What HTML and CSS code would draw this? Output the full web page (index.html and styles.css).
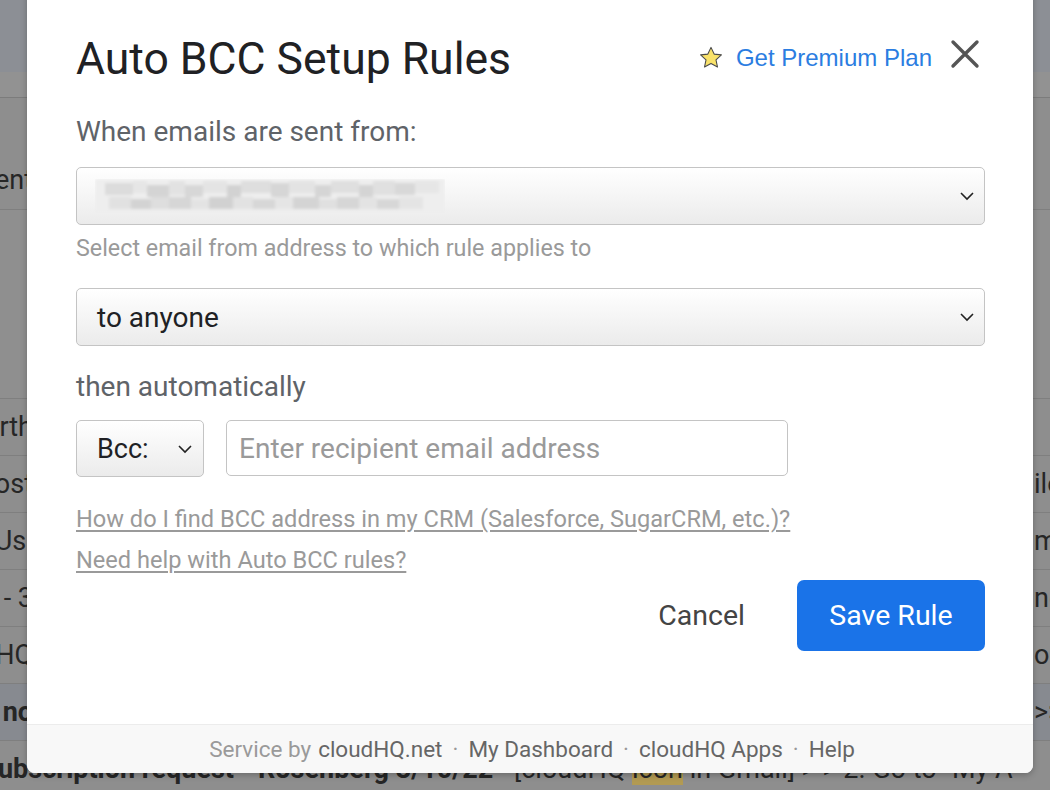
FILE: index.html
```html
<!DOCTYPE html>
<html>
<head>
<meta charset="utf-8">
<link rel="stylesheet" href="styles.css">
</head>
<body>
<div class="bg">
  <div class="bg-top"></div>
  <div class="bg-top2"></div>
  <div class="bg-sec"><span class="l">Sent</span></div>
  <div class="bg-empty"></div>
  <div class="bg-row"><span class="l">North</span><span class="r"></span></div>
  <div class="bg-row"><span class="l">Post</span><span class="r">iles</span></div>
  <div class="bg-row"><span class="l">Us&nbsp;</span><span class="r">mail</span></div>
  <div class="bg-row"><span class="l">- 3</span><span class="r">nd</span></div>
  <div class="bg-row"><span class="l">udHQ</span><span class="r">or</span></div>
  <div class="bg-row unread"><span class="l b">no</span><span class="r">&gt;&gt;</span></div>
  <div class="bg-row last"><span class="full"><b>ubscription request - Rosenberg 3/10/22</b> - [cloudHQ <mark>icon</mark> in Gmail] &gt; &gt; 2. Go to "My A</span></div>
</div>

<div class="modal">
  <div class="content">
    <div class="header">
      <h1 class="title">Auto BCC Setup Rules</h1>
      <div class="header-right">
        <svg class="star" width="26" height="26" viewBox="0 0 24 24"><path d="M12 2.2l2.9 6.2 6.7.7-5 4.6 1.4 6.6L12 17l-6 3.3 1.4-6.6-5-4.6 6.7-.7z" fill="#f9e26a" stroke="#4a4a4a" stroke-width="1" stroke-linejoin="round"/></svg>
        <a class="premium">Get Premium Plan</a>
        <svg class="close" width="30" height="30" viewBox="0 0 30 30"><path d="M3 3L27 27M27 3L3 27" stroke="#555" stroke-width="3.4" stroke-linecap="round"/></svg>
      </div>
    </div>

    <div class="label first">When emails are sent from:</div>
    <div class="select wide">
      <svg class="blur" width="350" height="34" viewBox="0 0 350 34">
        <defs><filter id="bl"><feGaussianBlur stdDeviation="1.4"/></filter></defs>
        <g filter="url(#bl)">
          <rect x="0" y="0" width="350" height="34" fill="#eeeeee"/>
          <rect x="10" y="4" width="28" height="12" fill="#dcdcdc"/>
          <rect x="38" y="2" width="14" height="12" fill="#e6e6e6"/>
          <rect x="52" y="6" width="22" height="12" fill="#d4d4d4"/>
          <rect x="74" y="2" width="16" height="14" fill="#e2e2e2"/>
          <rect x="90" y="6" width="18" height="12" fill="#d7d7d7"/>
          <rect x="108" y="2" width="24" height="12" fill="#e4e4e4"/>
          <rect x="132" y="6" width="14" height="12" fill="#d2d2d2"/>
          <rect x="146" y="2" width="30" height="12" fill="#dedede"/>
          <rect x="176" y="4" width="18" height="14" fill="#d6d6d6"/>
          <rect x="194" y="2" width="26" height="12" fill="#e3e3e3"/>
          <rect x="220" y="6" width="16" height="12" fill="#d5d5d5"/>
          <rect x="236" y="2" width="28" height="12" fill="#dfdfdf"/>
          <rect x="264" y="6" width="14" height="12" fill="#d4d4d4"/>
          <rect x="278" y="2" width="22" height="14" fill="#e0e0e0"/>
          <rect x="300" y="4" width="20" height="12" fill="#d8d8d8"/>
          <rect x="320" y="2" width="24" height="12" fill="#e6e6e6"/>
          <rect x="14" y="18" width="22" height="12" fill="#e1e1e1"/>
          <rect x="36" y="20" width="20" height="10" fill="#d3d3d3"/>
          <rect x="56" y="18" width="18" height="12" fill="#dedede"/>
          <rect x="74" y="18" width="22" height="12" fill="#d6d6d6"/>
          <rect x="96" y="20" width="18" height="10" fill="#e3e3e3"/>
          <rect x="114" y="18" width="24" height="12" fill="#d1d1d1"/>
          <rect x="138" y="18" width="20" height="12" fill="#e2e2e2"/>
          <rect x="158" y="20" width="22" height="10" fill="#d7d7d7"/>
          <rect x="180" y="18" width="18" height="12" fill="#e5e5e5"/>
          <rect x="198" y="18" width="26" height="12" fill="#d4d4d4"/>
          <rect x="224" y="20" width="18" height="10" fill="#e0e0e0"/>
          <rect x="242" y="18" width="22" height="12" fill="#d6d6d6"/>
          <rect x="264" y="18" width="18" height="12" fill="#e3e3e3"/>
          <rect x="282" y="20" width="22" height="10" fill="#d7d7d7"/>
          <rect x="304" y="18" width="24" height="12" fill="#e4e4e4"/>
        </g>
      </svg>
      <svg class="chev" width="16" height="10" viewBox="0 0 16 10"><path d="M2 2l6 6 6-6" fill="none" stroke="#222" stroke-width="1.6"/></svg>
    </div>
    <div class="hint">Select email from address to which rule applies to</div>

    <div class="select wide second">
      <span class="sel-text">to anyone</span>
      <svg class="chev" width="16" height="10" viewBox="0 0 16 10"><path d="M2 2l6 6 6-6" fill="none" stroke="#222" stroke-width="1.6"/></svg>
    </div>

    <div class="label then">then automatically</div>
    <div class="recip-row">
      <div class="select bcc">
        <span class="sel-text">Bcc:</span>
        <svg class="chev" width="16" height="10" viewBox="0 0 16 10"><path d="M2 2l6 6 6-6" fill="none" stroke="#222" stroke-width="1.6"/></svg>
      </div>
      <input class="recip" type="text" placeholder="Enter recipient email address">
    </div>

    <a class="help first-link">How do I find BCC address in my CRM (Salesforce, SugarCRM, etc.)?</a>
    <a class="help second-link">Need help with Auto BCC rules?</a>

    <div class="actions">
      <button class="cancel">Cancel</button>
      <button class="save">Save Rule</button>
    </div>
  </div>
  <div class="footer">
    <span class="muted">Service by</span> <span class="fl">cloudHQ.net</span> <span class="dot">·</span> <span class="fl">My Dashboard</span> <span class="dot">·</span> <span class="fl">cloudHQ Apps</span> <span class="dot">·</span> <span class="fl">Help</span>
  </div>
</div>
</body>
</html>
```
FILE: styles.css
```css
* { box-sizing: border-box; }
html, body { margin: 0; padding: 0; }
body {
  width: 1050px;
  height: 790px;
  overflow: hidden;
  position: relative;
  background: #8e8e8e;
  font-family: Roboto, "Liberation Sans", sans-serif;
}

/* dimmed background (gmail list) */
.bg { display: flex; flex-direction: column; color: #262626; font-size: 27px; }
.bg-top { height: 72px; background: #8c8f95; }
.bg-top2 { height: 26px; background: #929292; border-bottom: 1px solid #7c7c7c; }
.bg-sec { height: 112px; display: flex; align-items: flex-end; padding-bottom: 13px; border-bottom: 1px solid #7f7f7f; }
.bg-empty { height: 189px; border-bottom: 1px solid #7f7f7f; background: #8f8f8f; }
.bg-row { height: 57px; display: flex; align-items: center; justify-content: space-between; border-bottom: 1px solid #7f7f7f; }
.bg-row.unread { background: #878a90; }
.l { width: 33px; display: flex; justify-content: flex-end; overflow: hidden; white-space: nowrap; }
.l.b { font-weight: bold; }
.r { width: 16px; overflow: hidden; white-space: nowrap; }
.bg-row.last .full { white-space: nowrap; margin-left: -2px; font-size: 27px; }
.bg-row.last b { font-weight: bold; }
mark { background: #b29a52; color: #262626; }

/* modal */
.modal {
  position: absolute;
  left: 27px;
  top: -20px;
  width: 1006px;
  height: 793px;
  background: #fff;
  border-radius: 8px;
  box-shadow: 0 2px 6px rgba(0,0,0,0.25);
  display: flex;
  flex-direction: column;
  overflow: hidden;
}
.content { padding: 53px 48px 0 49px; display: flex; flex-direction: column; align-items: flex-start; }

.header { width: 100%; display: flex; align-items: center; justify-content: space-between; height: 50px; }
.title { margin: 0; font-weight: 400; font-size: 44.5px; line-height: 50px; color: #202124; margin-top: 2px; }
.header-right { display: flex; align-items: center; margin-top: -2px; }
.star { margin-right: 12px; margin-top: 2px; }
.premium { font-family: "Liberation Sans", Arial, sans-serif; font-size: 24px; color: #2b7de1; margin-right: 18px; margin-top: 2px; }
.close { margin-right: 5px; margin-top: -6px; }

.label { font-size: 28px; line-height: 36px; color: #5f6368; }
.label.first { margin-top: 31px; }
.label.then { margin-top: 23px; }

.select {
  display: flex;
  align-items: center;
  justify-content: space-between;
  height: 58px;
  border: 1.5px solid #c4c4c4;
  border-radius: 5px;
  background: linear-gradient(#ffffff, #ebebeb);
  padding: 0 9px 0 20px;
}
.select.wide { width: 909px; margin-top: 17px; }
.select.wide.second { margin-top: 26px; }
.blur { margin-left: -2px; }
.sel-text { font-size: 28px; color: #202124; }

.hint { margin-top: 9px; font-size: 23.3px; line-height: 28px; color: #9a9a9a; }

.recip-row { margin-top: 15px; display: flex; gap: 22px; }
.select.bcc { width: 128px; height: 57px; padding: 0 10px 0 20px; }
.select.bcc .sel-text { font-size: 27px; }
.recip {
  width: 562px;
  height: 56px;
  border: 1.5px solid #c4c4c4;
  border-radius: 5px;
  padding: 0 12px;
  font-family: Roboto, "Liberation Sans", sans-serif;
  font-size: 28px;
  color: #202124;
  outline: none;
}
.recip::placeholder { color: #9a9a9a; }

.help { font-size: 23.6px; line-height: 28px; color: #9a9a9a; text-decoration: underline; text-underline-offset: 3px; }
.help.first-link { margin-top: 28px; }
.help.second-link { margin-top: 13px; }

.actions { width: 100%; margin-top: 6px; display: flex; justify-content: flex-end; align-items: center; gap: 30px; }
.cancel {
  border: none; background: none; font-family: Roboto, "Liberation Sans", sans-serif;
  font-size: 28.5px; color: #444; padding: 0 22px; height: 71px; cursor: pointer;
}
.save {
  border: none; background: #1a73e8; color: #fff; font-family: Roboto, "Liberation Sans", sans-serif;
  font-size: 28.5px; width: 188px; height: 71px; border-radius: 7px;
}

.footer {
  margin-top: auto;
  height: 49px;
  background: #f8f8f8;
  border-top: 1px solid #ececec;
  display: flex;
  align-items: center;
  justify-content: center;
  gap: 7px;
  font-size: 22.5px;
  color: #666;
  padding-left: 4px;
}
.footer .muted { color: #9a9a9a; }
.footer .dot { color: #999; padding: 0 3px; }
```
